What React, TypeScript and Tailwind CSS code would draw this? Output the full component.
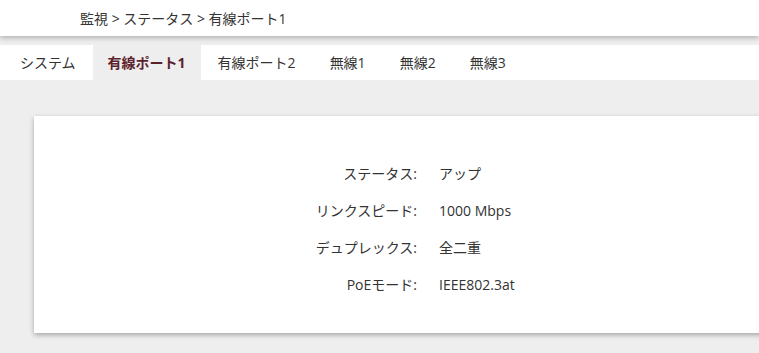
import React from "react";

const font = { fontFamily: '"Open Sans", "Noto Sans CJK JP", sans-serif' };

export default function App() {
  const tabs = ["システム", "有線ポート1", "有線ポート2", "無線1", "無線2", "無線3"];
  const rows: [string, string][] = [
    ["ステータス:", "アップ"],
    ["リンクスピード:", "1000 Mbps"],
    ["デュプレックス:", "全二重"],
    ["PoEモード:", "IEEE802.3at"],
  ];
  return (
    <div
      className="w-[759px] h-[353px] overflow-hidden bg-[#eeeeee] text-[#333333] text-[14px]"
      style={font}
    >
      <div className="relative z-10 h-[36px] bg-white shadow-[0_2px_5px_rgba(0,0,0,0.25)] flex items-center pl-[80px]">
        <span>監視 &gt; ステータス &gt; 有線ポート1</span>
      </div>
      <div className="mt-[9px] h-[35px] bg-white flex pl-[3px]">
        {tabs.map((t, i) => (
          <div
            key={t}
            className={
              i === 1
                ? "px-[15px] flex items-center bg-[#eeeeee] font-bold text-[#5c1f2e]"
                : "px-[17px] flex items-center"
            }
          >
            {t}
          </div>
        ))}
      </div>
      <div className="pt-[36px] pl-[34px]">
        <div className="w-[780px] h-[217px] bg-white shadow-[0_2px_5px_rgba(0,0,0,0.3)] pt-[39px]">
          <div className="grid grid-cols-[383px_auto] gap-x-[22px]">
            {rows.map(([l, v]) => (
              <React.Fragment key={l}>
                <div className="h-[37px] flex items-center justify-end">{l}</div>
                <div className="h-[37px] flex items-center">{v}</div>
              </React.Fragment>
            ))}
          </div>
        </div>
      </div>
    </div>
  );
}
